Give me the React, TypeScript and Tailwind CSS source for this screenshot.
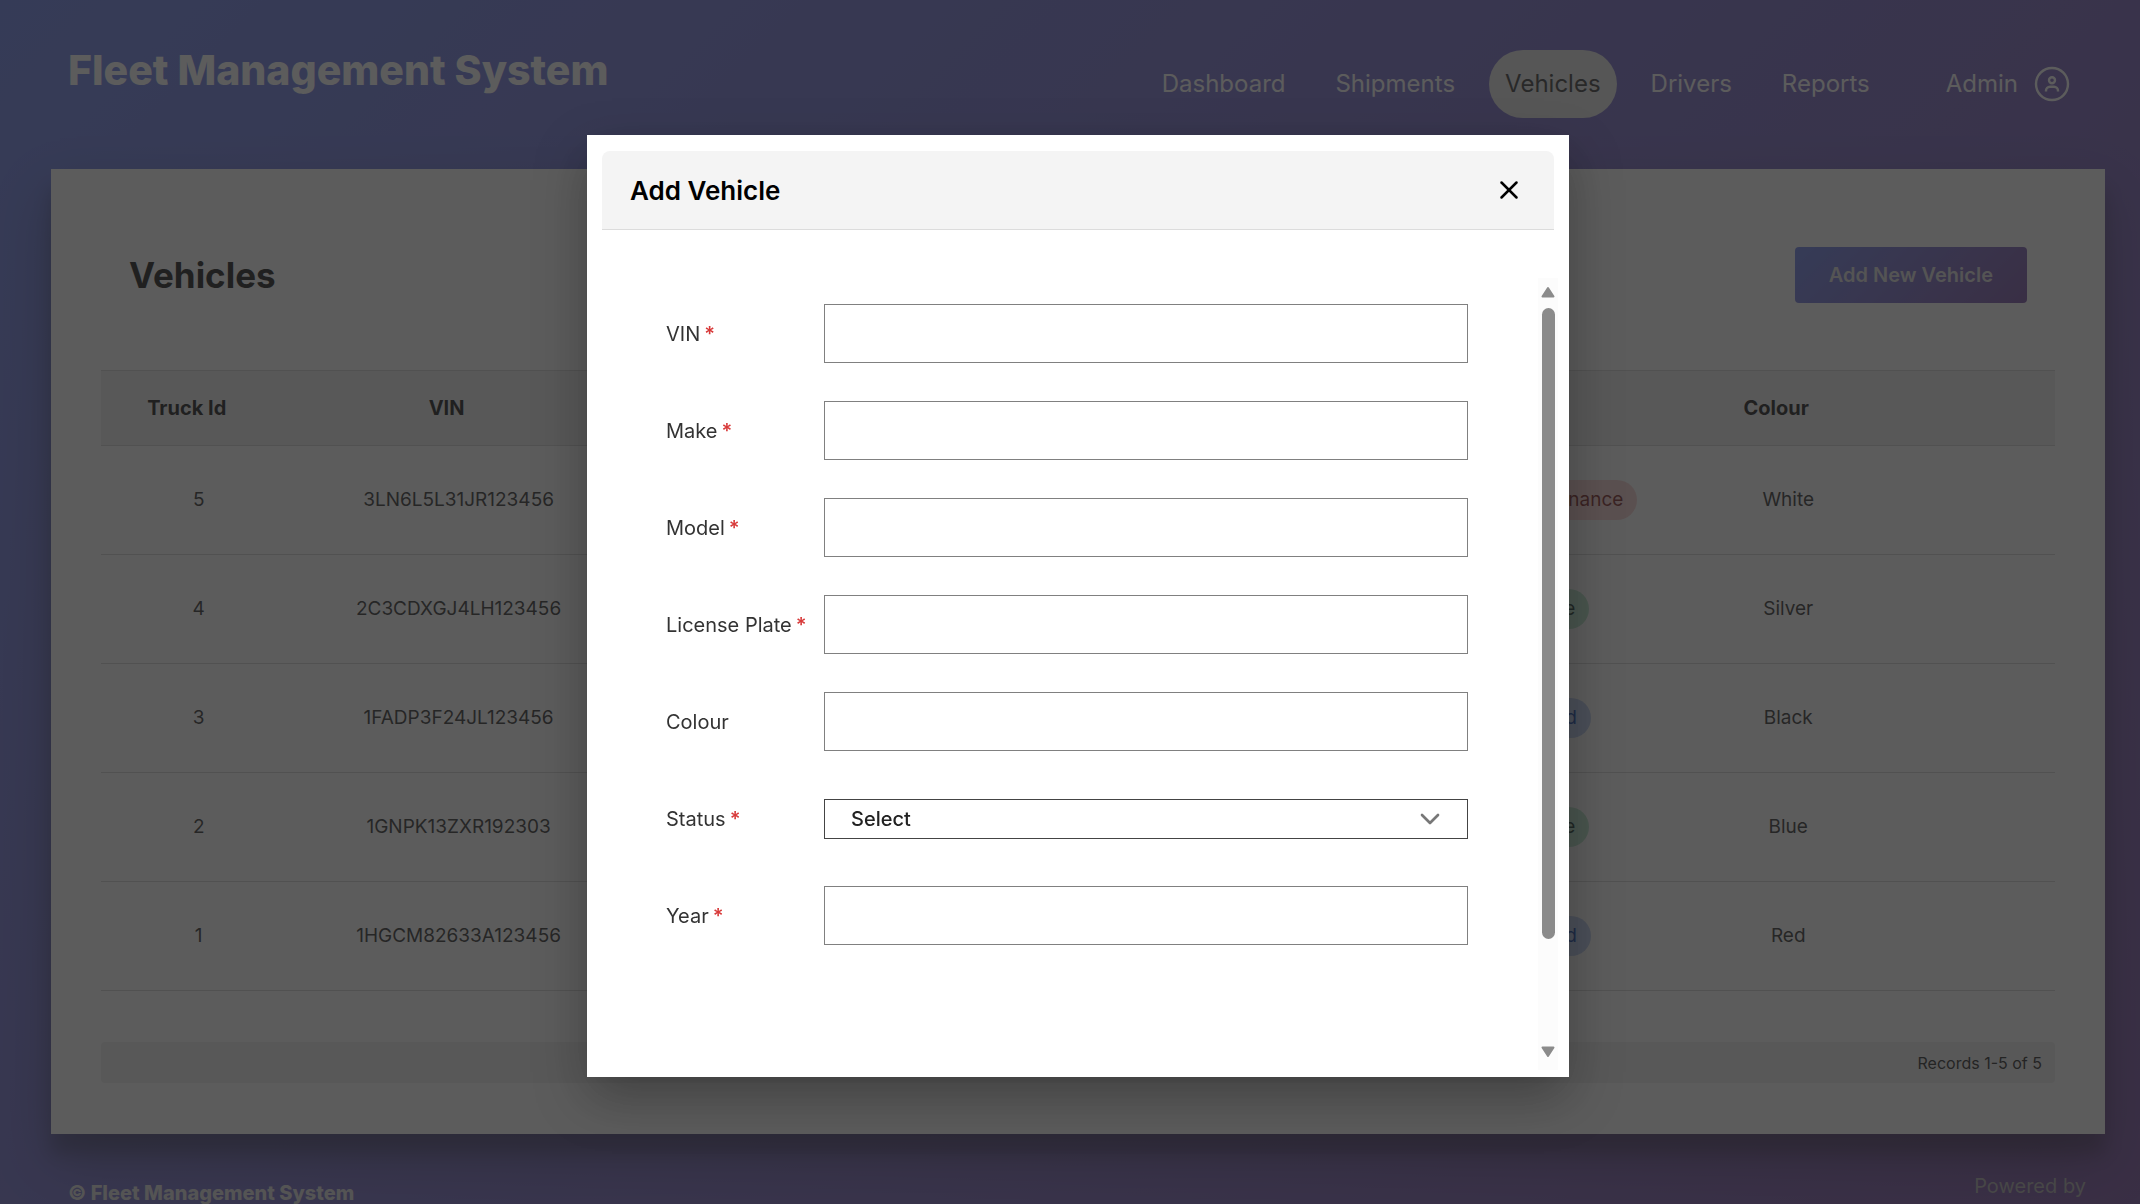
import { useState } from "react";
import { ChevronDown, X } from "lucide-react";

const navLinks = ["Dashboard", "Shipments", "Vehicles", "Drivers", "Reports"];

const vehicles = [
  { id: 5, vin: "3LN6L5L31JR123456", make: "Lincoln", model: "MKZ", plate: "KLM 4821", status: "Under Maintenance", colour: "White" },
  { id: 4, vin: "2C3CDXGJ4LH123456", make: "Dodge", model: "Charger", plate: "HJD 7310", status: "Available", colour: "Silver" },
  { id: 3, vin: "1FADP3F24JL123456", make: "Ford", model: "Focus", plate: "FRD 2264", status: "Assigned", colour: "Black" },
  { id: 2, vin: "1GNPK13ZXR192303", make: "Chevrolet", model: "Tahoe", plate: "CHV 9057", status: "Available", colour: "Blue" },
  { id: 1, vin: "1HGCM82633A123456", make: "Honda", model: "Accord", plate: "HND 1148", status: "Assigned", colour: "Red" },
];

const statusStyles: Record<string, string> = {
  "Under Maintenance": "bg-[#f8d0d0] text-[#7a1c1c]",
  Available: "bg-[#b4e4c8] text-[#14332a]",
  Assigned: "bg-[#b9cbf0] text-[#0b3fa8]",
};

const fields = [
  { id: "vin", label: "VIN", required: true },
  { id: "make", label: "Make", required: true },
  { id: "model", label: "Model", required: true },
  { id: "plate", label: "License Plate", required: true },
  { id: "colour", label: "Colour", required: false },
  { id: "status", label: "Status", required: true },
  { id: "year", label: "Year", required: true },
];

const UserIcon = () => (
  <svg width="36" height="36" viewBox="0 0 36 36" fill="none" stroke="currentColor" strokeWidth="2.4">
    <circle cx="18" cy="18" r="16" />
    <circle cx="18" cy="14.2" r="3" />
    <path d="M12 25.500v-.8a4 4 0 0 1 4-4h4a4 4 0 0 1 4 4v.8" />
  </svg>
);

const Header = () => (
  <header className="flex items-start justify-between pt-[42px] pl-[68px] pr-[70px]">
    <h1 className="text-[41px] leading-14 font-extrabold text-white">Fleet Management System</h1>
    <nav className="flex items-center pt-2 text-2xl text-white">
      {navLinks.map((link) => (
        <a
          key={link}
          href={"#" + link.toLowerCase()}
          className={
            link === "Vehicles"
              ? "mx-[9px] flex h-[68px] items-center rounded-[34px] bg-[#e6e6e6] px-4 text-[#333]"
              : "flex h-[68px] items-center px-[25px]"
          }
        >
          {link}
        </a>
      ))}
      <a href="#admin" className="ml-[51px] flex items-center gap-4">
        Admin
        <UserIcon />
      </a>
    </nav>
  </header>
);

const VehicleTable = () => (
  <table className="mt-[67px] w-full table-fixed border-collapse text-center text-[19px] text-[#2a2a2a]">
    <colgroup>
      <col className="w-[10%]" />
      <col className="w-[16.6%]" />
      <col className="w-[13.3%]" />
      <col className="w-[13.3%]" />
      <col className="w-[13.3%]" />
      <col className="w-[13.8%]" />
      <col className="w-[12.1%]" />
      <col className="w-[7.6%]" />
    </colgroup>
    <thead>
      <tr className="h-[75px] border-y border-[#d4d4d4] bg-[#efefef] text-xl text-[#111]">
        {["Truck Id", "VIN", "Make", "Model", "License Plate", "Status", "Colour", ""].map((name) => (
          <th key={name} className="pr-6 font-bold">{name}</th>
        ))}
      </tr>
    </thead>
    <tbody>
      {vehicles.map((v) => (
        <tr key={v.id} className="h-[109px] border-b border-[#d4d4d4]">
          <td>{v.id}</td>
          <td>{v.vin}</td>
          <td>{v.make}</td>
          <td>{v.model}</td>
          <td>{v.plate}</td>
          <td>
            <span className={"inline-flex h-10 items-center rounded-full px-[14px] whitespace-nowrap " + statusStyles[v.status]}>
              {v.status}
            </span>
          </td>
          <td>{v.colour}</td>
          <td></td>
        </tr>
      ))}
    </tbody>
  </table>
);

const AddVehicleDialog = ({ onClose }: { onClose: () => void }) => (
  <div className="fixed inset-0 flex items-start justify-center bg-[#262626]/75 pt-[135px] pl-4">
    <div
      role="dialog"
      aria-labelledby="dialog-title"
      className="w-full max-w-[982px] bg-white px-[15px] pt-4 pb-[7px] shadow-[0_20px_50px_rgba(0,0,0,0.3)]"
    >
      <div className="flex h-[79px] items-center justify-between rounded-t-lg border-b border-[#dcdcdc] bg-[#f4f4f4] pr-[30px] pl-7">
        <h2 id="dialog-title" className="text-[26px] font-semibold text-black">Add Vehicle</h2>
        <button type="button" aria-label="Close" onClick={onClose} className="text-black">
          <X size={30} strokeWidth={2} />
        </button>
      </div>

      <div className="mt-12 -mr-1 flex justify-between">
        <form className="grow pt-[7px] pr-[70px] pb-[106px] pl-16">
          {fields.map((field) => (
            <div key={field.id} className="flex h-[97px] items-center">
              <label htmlFor={field.id} className="w-[158px] shrink-0 text-xl whitespace-nowrap text-[#333]">
                {field.label}
                {field.required && <span className="ml-1 font-semibold text-[#d83a3a]">*</span>}
              </label>
              {field.id === "status" ? (
                <div className="relative grow">
                  <select
                    id={field.id}
                    className="block h-10 w-full appearance-none border border-[#444] bg-white px-[26px] text-xl font-medium text-[#222]"
                  >
                    <option>Select</option>
                    <option>Available</option>
                    <option>Assigned</option>
                    <option>Under Maintenance</option>
                  </select>
                  <ChevronDown size={32} strokeWidth={2} className="pointer-events-none absolute top-1 right-[22px] text-[#777]" />
                </div>
              ) : (
                <input id={field.id} type="text" className="h-[59px] min-w-0 grow border border-[#808080] px-4 text-xl" />
              )}
            </div>
          ))}
        </form>

        {/* Scroll track */}
        <div className="flex w-5 shrink-0 flex-col items-center bg-[#fcfcfc] pt-2 pb-3">
          <svg width="14" height="12" viewBox="0 0 14 12" fill="#8b8b8b" stroke="#8b8b8b" strokeWidth="2" strokeLinejoin="round">
            <path d="M7 2 L12.500 10.500 H1.500 Z" />
          </svg>
          <div className="mt-[10px] h-[631px] w-[13px] rounded-full bg-[#8b8b8b]"></div>
          <svg className="mt-auto" width="14" height="12" viewBox="0 0 14 12" fill="#8b8b8b" stroke="#8b8b8b" strokeWidth="2" strokeLinejoin="round">
            <path d="M7 10 L12.500 1.500 H1.500 Z" />
          </svg>
        </div>
      </div>
    </div>
  </div>
);

const App = () => {
  const [isOpen, setIsOpen] = useState(true);

  return (
    <div className="h-screen overflow-hidden bg-linear-135 from-[#667eea] to-[#764ba2] font-['Inter','Noto_Sans',sans-serif]">
      <Header />

      <main className="mt-[51px] mr-[35px] ml-[51px] bg-white px-[50px] pt-[78px] pb-[51px] shadow-[0_26px_52px_rgba(0,0,0,0.3),0_20px_16px_rgba(0,0,0,0.22)]">
        <div className="flex items-center justify-between px-7">
          <h2 className="text-[35px] leading-[51px] font-bold text-[#111]">Vehicles</h2>
          <button
            type="button"
            onClick={() => setIsOpen(true)}
            className="h-14 rounded-sm bg-linear-135 from-[#667eea] to-[#764ba2] px-[34px] text-xl font-semibold text-[#ddd]"
          >
            Add New Vehicle
          </button>
        </div>
        <VehicleTable />
        <div className="mt-[51px] flex h-[41px] items-center justify-end rounded-sm bg-[#efefef] px-[13px] text-base text-[#222]">
          Records 1-5 of 5
        </div>
      </main>

      <footer className="flex items-start justify-between pt-[38px] pr-[54px] pl-[68px] text-xl text-[#ddd]">
        <p className="pt-[7px] font-extrabold">© Fleet Management System</p>
        <p className="text-[#aaa]">Powered by</p>
      </footer>

      {isOpen && <AddVehicleDialog onClose={() => setIsOpen(false)} />}
    </div>
  );
};

export default App;
